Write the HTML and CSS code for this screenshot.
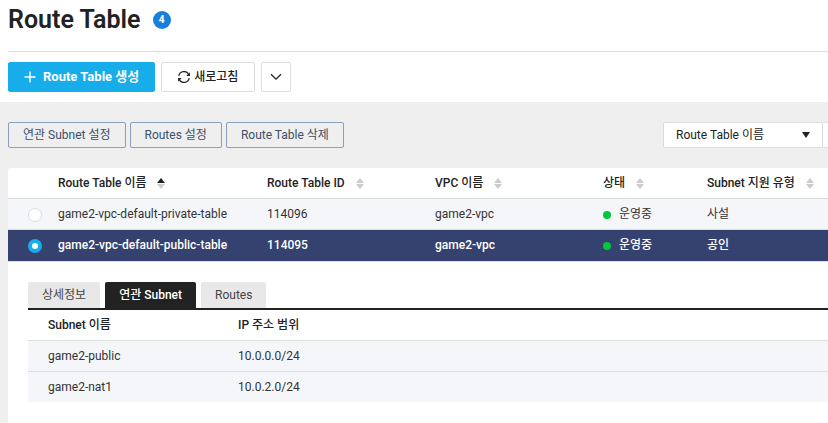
FILE: index.html
```html
<!DOCTYPE html>
<html lang="ko">
<head>
    <meta charset="UTF-8">
    <meta name="viewport" content="width=device-width, initial-scale=1.0">
    <title>Route Table</title>
    <link rel="stylesheet" href="styles.css">
</head>
<body>
    <header class="page-header">
        <div class="title-row">
            <h1>Route Table</h1>
            <span class="count">4</span>
        </div>
        <div class="main-actions">
            <button type="button" class="btn btn-primary">
                <svg width="12" height="12" viewBox="0 0 12 12"><path d="M6 0.5V11.5M0.5 6H11.5" stroke="#fff" stroke-width="1.4"/></svg>
                Route Table 생성
            </button>
            <button type="button" class="btn btn-refresh">
                <svg width="12" height="12" viewBox="0 0 12 12" fill="none" stroke="#222" stroke-width="1.2">
                    <path d="M0.8 4.8A5.2 5.2 0 0 1 10.8 4M11.2 7.2A5.2 5.2 0 0 1 1.2 8"/>
                    <path d="M11.3 1.8V4.3H8.8M0.7 10.2V7.7H3.2"/>
                </svg>
                새로고침
            </button>
            <button type="button" class="btn btn-more" aria-label="더보기">
                <svg width="12" height="8" viewBox="0 0 12 8"><path d="M1 1.2L6 6.2L11 1.2" fill="none" stroke="#222" stroke-width="1.3"/></svg>
            </button>
        </div>
    </header>

    <main class="content">
        <div class="toolbar">
            <button type="button" class="btn-outline">연관 Subnet 설정</button>
            <button type="button" class="btn-outline">Routes 설정</button>
            <button type="button" class="btn-outline">Route Table 삭제</button>
            <div class="search">
                <select aria-label="검색 조건">
                    <option>Route Table 이름</option>
                </select>
                <input type="text" aria-label="검색어">
            </div>
        </div>

        <section class="panel">
            <table class="route-table">
                <colgroup>
                    <col class="col-radio">
                    <col class="col-name">
                    <col class="col-id">
                    <col class="col-vpc">
                    <col class="col-status">
                    <col>
                </colgroup>
                <thead>
                    <tr>
                        <th></th>
                        <th>Route Table 이름<span class="sort sort-asc"></span></th>
                        <th>Route Table ID<span class="sort"></span></th>
                        <th>VPC 이름<span class="sort"></span></th>
                        <th>상태<span class="sort"></span></th>
                        <th>Subnet 지원 유형<span class="sort"></span></th>
                    </tr>
                </thead>
                <tbody>
                    <tr>
                        <td><input type="radio" name="route" id="route-114096"></td>
                        <td><label for="route-114096">game2-vpc-default-private-table</label></td>
                        <td>114096</td>
                        <td>game2-vpc</td>
                        <td><span class="dot"></span>운영중</td>
                        <td>사설</td>
                    </tr>
                    <tr class="selected">
                        <td><input type="radio" name="route" id="route-114095" checked></td>
                        <td><label for="route-114095">game2-vpc-default-public-table</label></td>
                        <td>114095</td>
                        <td>game2-vpc</td>
                        <td><span class="dot"></span>운영중</td>
                        <td>공인</td>
                    </tr>
                </tbody>
            </table>

            <div class="detail">
                <div class="tabs">
                    <button type="button">상세정보</button>
                    <button type="button" class="active">연관 Subnet</button>
                    <button type="button">Routes</button>
                </div>
                <table class="subnet-table">
                    <colgroup>
                        <col class="col-subnet">
                        <col>
                    </colgroup>
                    <thead>
                        <tr>
                            <th>Subnet 이름</th>
                            <th>IP 주소 범위</th>
                        </tr>
                    </thead>
                    <tbody>
                        <tr>
                            <td>game2-public</td>
                            <td>10.0.0.0/24</td>
                        </tr>
                        <tr>
                            <td>game2-nat1</td>
                            <td>10.0.2.0/24</td>
                        </tr>
                    </tbody>
                </table>
            </div>
        </section>
    </main>
</body>
</html>
```

FILE: styles.css
```css
* {
    box-sizing: border-box;
}
body {
    margin: 0;
    min-height: 100vh;
    display: flex;
    flex-direction: column;
    font-family: Roboto, "Noto Sans CJK KR", sans-serif;
    font-size: 12px;
    line-height: 18px;
    color: #222;
    background: #fff;
    overflow-x: hidden;
}
button, select, input {
    font: inherit;
    color: inherit;
    margin: 0;
}
button {
    padding: 0;
    cursor: pointer;
    white-space: nowrap;
}

/* header */
.page-header {
    padding-left: 8px;
}
.title-row {
    display: flex;
    align-items: center;
    gap: 12px;
    height: 52px;
    padding-bottom: 12px;
    border-bottom: 1px solid #ddd;
}
h1 {
    margin: 0;
    font-size: 25px;
    line-height: 32px;
    font-weight: 600;
}
.count {
    width: 18px;
    height: 18px;
    border-radius: 50%;
    background: #1a7fdc;
    color: #fff;
    font-size: 10px;
    font-weight: 700;
    text-align: center;
}
.main-actions {
    display: flex;
    gap: 6px;
    padding: 10px 0;
}
.btn {
    display: flex;
    align-items: center;
    justify-content: center;
    height: 30px;
    border: 1px solid #ddd;
    border-radius: 2px;
    background: #fff;
    font-weight: 500;
}
.btn-primary {
    gap: 7px;
    padding: 0 15px;
    border-color: #17adea;
    background: #17adea;
    color: #fff;
    font-size: 13px;
    font-weight: 700;
}
.btn-refresh {
    gap: 4px;
    padding: 0 16px;
}
.btn-more {
    width: 30px;
}

/* content */
.content {
    flex: 1;
    display: flex;
    flex-direction: column;
    padding: 20px 0 0 8px;
    background: #efefef;
}
.toolbar {
    display: flex;
    gap: 4px;
    margin-bottom: 20px;
}
.btn-outline {
    height: 26px;
    padding: 0 14px;
    border: 1px solid #8ba1bb;
    border-radius: 2px;
    background: none;
    color: #3c506b;
}
.search {
    display: flex;
    margin-left: auto;
}
.search select {
    width: 160px;
    height: 26px;
    padding: 0 12px;
    border: 1px solid #ddd;
    border-radius: 2px;
    appearance: none;
    background: #fff url("data:image/svg+xml,%3Csvg xmlns='http://www.w3.org/2000/svg' width='8' height='6'%3E%3Cpath d='M0 0H8L4 6Z' fill='%23222'/%3E%3C/svg%3E") no-repeat right 12px center;
}
.search input {
    width: 5px;
    height: 26px;
    padding: 0;
    border: 1px solid #ddd;
    border-width: 1px 0 1px 0;
    background: #fff;
}
.panel {
    flex: 1;
    border-top-left-radius: 3px;
    background: #fff;
}

/* tables */
table {
    width: 100%;
    table-layout: fixed;
    border-collapse: separate;
    border-spacing: 0;
}
th, td {
    height: 31px;
    padding: 0;
    border-bottom: 1px solid #ddd;
    text-align: left;
    white-space: nowrap;
}
th {
    font-weight: 500;
}
td {
    background: #f5f6f9;
    color: #333;
}
.col-radio {
    width: 50px;
}
.col-name {
    width: 209px;
}
.col-id {
    width: 168px;
}
.col-vpc {
    width: 168px;
}
.col-status {
    width: 104px;
}
.selected td {
    height: 32px;
    padding-bottom: 1px;
    background: #35426f;
    color: #fff;
    font-weight: 500;
}
.sort {
    display: inline-flex;
    flex-direction: column;
    gap: 1px;
    margin-left: 11px;
    vertical-align: middle;
}
.sort::before, .sort::after {
    content: "";
    border: 4px solid transparent;
}
.sort::before {
    border-top: 0;
    border-bottom: 5px solid #ccc;
}
.sort::after {
    border-bottom: 0;
    border-top: 5px solid #ccc;
}
.sort-asc::before {
    border-bottom-color: #222;
}
input[type="radio"] {
    display: block;
    width: 14px;
    height: 14px;
    margin: 2px 0 0 20px;
    border: 1px solid #ddd;
    border-radius: 50%;
    appearance: none;
    background: #fff;
}
input[type="radio"]:checked {
    border: 4px solid #17adea;
}
.dot {
    display: inline-block;
    width: 8px;
    height: 8px;
    margin-right: 8px;
    border-radius: 50%;
    background: #00c73c;
    vertical-align: -1px;
}

/* detail */
.detail {
    padding: 20px 0 20px 20px;
}
.tabs {
    display: flex;
    gap: 5px;
    border-bottom: 2px solid #222;
}
.tabs button {
    height: 26px;
    padding: 0 14px;
    border: 0;
    border-radius: 2px 2px 0 0;
    background: #e8e8e8;
    color: #444;
}
.tabs .active {
    background: #222;
    color: #fff;
    font-weight: 500;
}
.subnet-table th, .subnet-table td {
    padding-left: 20px;
}
.subnet-table tr:last-child td {
    height: 30px;
    border-bottom: 0;
}
.col-subnet {
    width: 190px;
}
```
